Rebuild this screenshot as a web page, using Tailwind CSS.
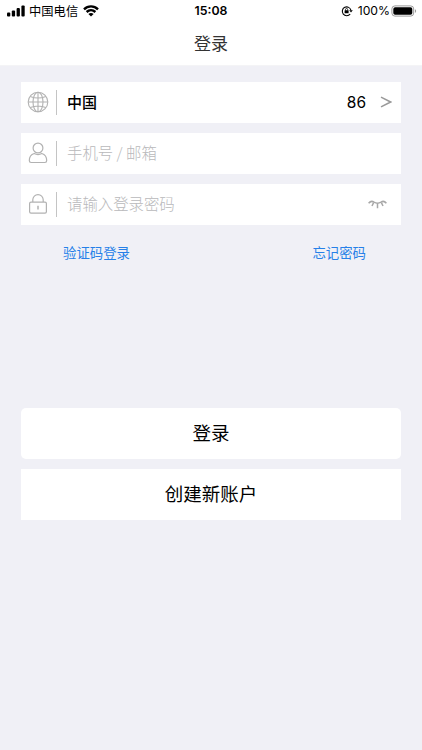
<!DOCTYPE html>
<html lang="zh-CN">
<head>
  <meta charset="UTF-8" />
  <meta name="viewport" content="width=device-width, initial-scale=1.0" />
  <title>登录</title>
  <script src="https://cdn.jsdelivr.net/npm/@tailwindcss/browser@4"></script>
</head>
<body class="bg-[#f0f0f6] text-black font-['Inter','Noto_Sans_CJK_SC',sans-serif] h-screen overflow-hidden">
  <!-- Header -->
  <header class="h-[66px] bg-white border-b border-[#f4f4f6]">
    <!-- Status bar -->
    <div class="h-[23px] grid grid-cols-3 items-center pl-[7px] pr-[6px] text-[12.3px] leading-none">
      <div class="flex items-center">
        <svg class="w-[18px] h-[12px] -mt-px" viewBox="0 0 18 12">
          <rect x="0" y="7.5" width="3.3" height="4" rx="1" />
          <rect x="4.8" y="5.5" width="3.3" height="6" rx="1" />
          <rect x="9.6" y="3" width="3.3" height="8.5" rx="1" />
          <rect x="14.4" y="0.5" width="3.3" height="11" rx="1" />
        </svg>
        <span class="ml-[4px] pt-px whitespace-nowrap">中国电信</span>
        <svg class="ml-[5px] w-[16px] h-[12px] -mt-px" viewBox="0 0 16 12" fill="none" stroke="#000" stroke-width="2.4">
          <path d="M1 4.3C5 .4 11 .4 15 4.3" />
          <path d="M3.6 7C6.2 4.6 9.8 4.6 12.4 7" />
          <path d="M8 11.6 5.4 9C6.8 7.7 9.2 7.7 10.6 9Z" fill="#000" stroke="none" />
        </svg>
      </div>
      <div class="text-center font-semibold -ml-px">15:08</div>
      <div class="flex items-center justify-end">
        <!-- Rotation lock -->
        <svg class="w-[12px] h-[12px] -mt-px" viewBox="0 0 12 12" fill="none" stroke="#000">
          <path d="M9.2 9A4.4 4.4 0 1 1 10 5.4" stroke-width="1.1" />
          <path d="M8.2 5.2h3.6L10 7.6Z" fill="#000" stroke="none" />
          <rect x="3.6" y="5.3" width="4" height="3" rx=".4" fill="#000" stroke="none" />
          <path d="M4.5 5.5V4.6a1.1 1.1 0 0 1 2.2 0v.9" stroke-width=".8" />
        </svg>
        <span class="ml-[5px] pb-px text-[12.2px]">100%</span>
        <!-- Battery -->
        <svg class="ml-[1px] -mr-px w-[26px] h-[12px] -mt-px" viewBox="0 0 26 12">
          <rect x=".9" y=".9" width="21.8" height="10.2" rx="3" fill="none" stroke="#9a9a9a" />
          <rect x="2.3" y="2.3" width="19" height="7.4" rx="1.8" />
          <path d="M24 4.2c1.5.5 1.5 3.1 0 3.6Z" fill="#9a9a9a" />
        </svg>
      </div>
    </div>
    <h1 class="h-[42px] pt-px flex items-center justify-center text-[17px] text-[#333]">登录</h1>
  </header>

  <main class="px-[21px] pt-[16px]">
    <!-- Form -->
    <div class="flex flex-col gap-[10px] text-[15px]">
      <div class="h-[41px] bg-white flex items-center pb-px pl-[6px] pr-[9px]">
        <svg class="w-[22px] h-[22px]" viewBox="0 0 22 22" fill="none" stroke="#b2b2b2" stroke-width="1.1">
          <circle cx="11" cy="11" r="9.8" />
          <ellipse cx="11" cy="11" rx="5" ry="9.8" />
          <path d="M11 1.2v19.6M1.2 11h19.6M3.2 5.4c4.6 1.9 11 1.9 15.6 0M3.2 16.6c4.6-1.9 11-1.9 15.6 0" />
        </svg>
        <div class="ml-[7px] w-px h-[25px] bg-[#c4c4c4]"></div>
        <span class="ml-[10px] pt-px font-['Noto_Sans_CJK_SC',sans-serif] font-medium">中国</span>
        <span class="ml-auto pt-[2px] text-[15.5px]">86</span>
        <svg class="ml-[14px] w-[12px] h-[12px]" viewBox="0 0 12 12" fill="none" stroke="#999" stroke-width="1.5">
          <path d="M1 1.2 10.6 6 1 10.8" />
        </svg>
      </div>

      <div class="h-[41px] bg-white flex items-center pb-px pl-[6px] pr-[9px] text-[#b9b9bb]">
        <svg class="w-[22px] h-[22px]" viewBox="0 0 22 22" fill="none" stroke="#b2b2b2" stroke-width="1.2">
          <circle cx="11" cy="6" r="4.9" />
          <path d="M7.2 11.5C4 12.5 2.3 15.3 2.3 18.6c0 1.3.6 1.9 1.8 1.9h13.8c1.2 0 1.8-.6 1.8-1.9 0-3.3-1.7-6.1-4.9-7.1-2.3 1.3-5.3 1.3-7.6 0Z" />
        </svg>
        <div class="ml-[7px] w-px h-[25px] bg-[#c4c4c4]"></div>
        <span class="ml-[10px] font-light font-['Noto_Sans_CJK_SC',sans-serif] text-[15.4px]">手机号 / 邮箱</span>
      </div>

      <div class="h-[41px] bg-white flex items-center pb-px pl-[6px] pr-[14px] text-[#b9b9bb]">
        <svg class="w-[22px] h-[22px]" viewBox="0 0 22 22" fill="none" stroke="#b2b2b2" stroke-width="1.2">
          <rect x="2.6" y="9.2" width="16.8" height="11" rx="1.4" />
          <path d="M5.8 9V6.8a5.2 5.2 0 0 1 10.4 0V9" />
          <path d="M11 12.8v3.8" stroke-width="1.5" />
        </svg>
        <div class="ml-[7px] w-px h-[25px] bg-[#c4c4c4]"></div>
        <span class="ml-[10px] font-light font-['Noto_Sans_CJK_SC',sans-serif] text-[15.4px]">请输入登录密码</span>
        <!-- Closed eye -->
        <svg class="ml-auto w-[19px] h-[10px]" viewBox="0 0 19 10" fill="none" stroke="#a8a8a8" stroke-width="1.5">
          <path d="M.6 4.2C3 1.4 4.4 2 6 3.2c2.2 1.3 4.8 1.3 7 0 1.6-1.2 3-1.8 5.4 1" />
          <path d="M5.6 3.6 4 7M9.5 4.4v4.8M13.4 3.6 15 7" />
        </svg>
      </div>
    </div>

    <div class="mt-[18px] h-[20px] flex items-center justify-between pl-[42px] pr-[35px] text-[13.4px] text-[#2680e8]">
      <a href="#">验证码登录</a>
      <a href="#">忘记密码</a>
    </div>

    <!-- Actions -->
    <div class="mt-[145px] flex flex-col gap-[10px] text-[18.5px]">
      <button class="h-[51px] bg-white rounded-[5px]">登录</button>
      <button class="h-[51px] bg-white">创建新账户</button>
    </div>
  </main>
</body>
</html>
